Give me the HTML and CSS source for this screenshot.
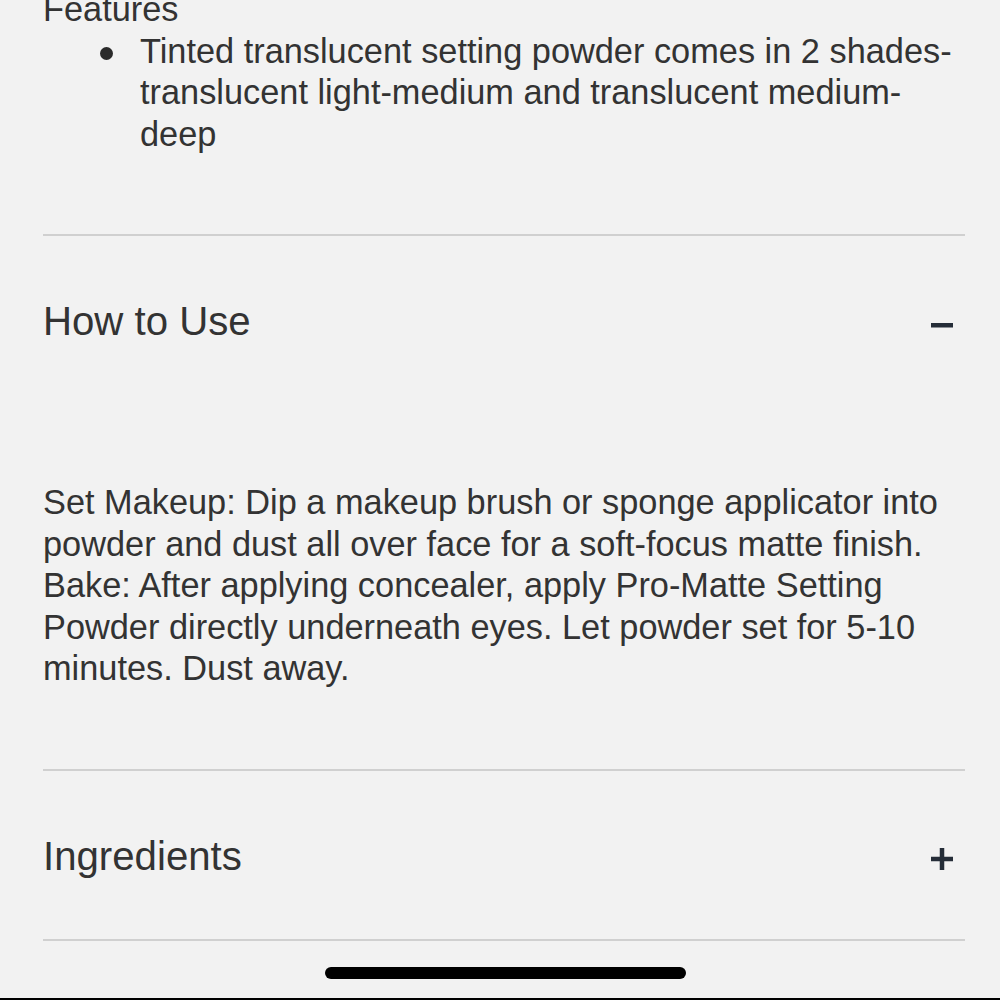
FILE: index.html
```html
<!DOCTYPE html>
<html lang="en">
<head>
<meta charset="utf-8">
<title>Product details</title>
<link rel="stylesheet" href="styles.css">
</head>
<body>
<main class="page">
  <section class="acc acc-open">
    <div class="acc-body acc-body-first">
      <p class="sub">Features</p>
      <ul class="bullets">
        <li>Tinted translucent setting powder comes in 2 shades-<br>translucent light-medium and translucent medium-<br>deep</li>
      </ul>
    </div>
  </section>

  <section class="acc acc-open">
    <div class="acc-head">
      <h2 class="acc-title">How to Use</h2>
      <span class="icon" aria-hidden="true">
        <svg width="22" height="22" viewBox="0 0 22 22"><rect x="0" y="9" width="22" height="4.5" fill="#252d38"/></svg>
      </span>
    </div>
    <div class="acc-body">
      <p class="text">Set Makeup: Dip a makeup brush or sponge applicator into<br>powder and dust all over face for a soft-focus matte finish.<br>Bake: After applying concealer, apply Pro-Matte Setting<br>Powder directly underneath eyes. Let powder set for 5-10<br>minutes. Dust away.</p>
    </div>
  </section>

  <section class="acc">
    <div class="acc-head">
      <h2 class="acc-title">Ingredients</h2>
      <span class="icon" aria-hidden="true">
        <svg width="22" height="22" viewBox="0 0 22 22"><rect x="0" y="8.75" width="22" height="4.5" fill="#252d38"/><rect x="8.75" y="0" width="4.5" height="22" fill="#252d38"/></svg>
      </span>
    </div>
  </section>
</main>
<div class="home-indicator"></div>
</body>
</html>
```

FILE: styles.css
```css
html, body {
  margin: 0;
  padding: 0;
}
body {
  background: #f2f2f2;
  color: #333333;
  font-family: "Liberation Sans", Arial, Helvetica, sans-serif;
  height: 1000px;
  overflow: hidden;
  box-sizing: border-box;
  border-bottom: 2px solid #000;
}
.page {
  margin: -11px 35px 0 43px;
}
.acc {
  border-bottom: 2px solid #d0d0d0;
}
.acc-head {
  height: 168px;
  display: flex;
  align-items: center;
  justify-content: space-between;
}
.acc-title {
  margin: 0;
  padding-top: 4px;
  font-size: 40.2px;
  font-weight: normal;
  line-height: 48px;
  color: #333333;
}
.icon {
  display: flex;
  width: 22px;
  height: 22px;
  margin-right: 12px;
  margin-top: 9px;
}
.acc-body {
  padding: 78px 0 79px;
}
.acc-body-first {
  padding: 0 0 79px;
}
.sub,
.text {
  margin: 0;
  font-size: 34.35px;
  line-height: 41.5px;
  white-space: nowrap;
}
.bullets {
  margin: 0;
  padding: 0 0 0 97px;
  list-style: none;
}
.bullets li {
  position: relative;
  font-size: 34.35px;
  line-height: 41.5px;
  white-space: nowrap;
}
.bullets li::before {
  content: "";
  position: absolute;
  left: -40px;
  top: 16px;
  width: 13px;
  height: 13px;
  border-radius: 50%;
  background: #2b2b2b;
}
.home-indicator {
  position: fixed;
  left: 325px;
  top: 967px;
  width: 361px;
  height: 12px;
  border-radius: 6px;
  background: #000;
}
```
